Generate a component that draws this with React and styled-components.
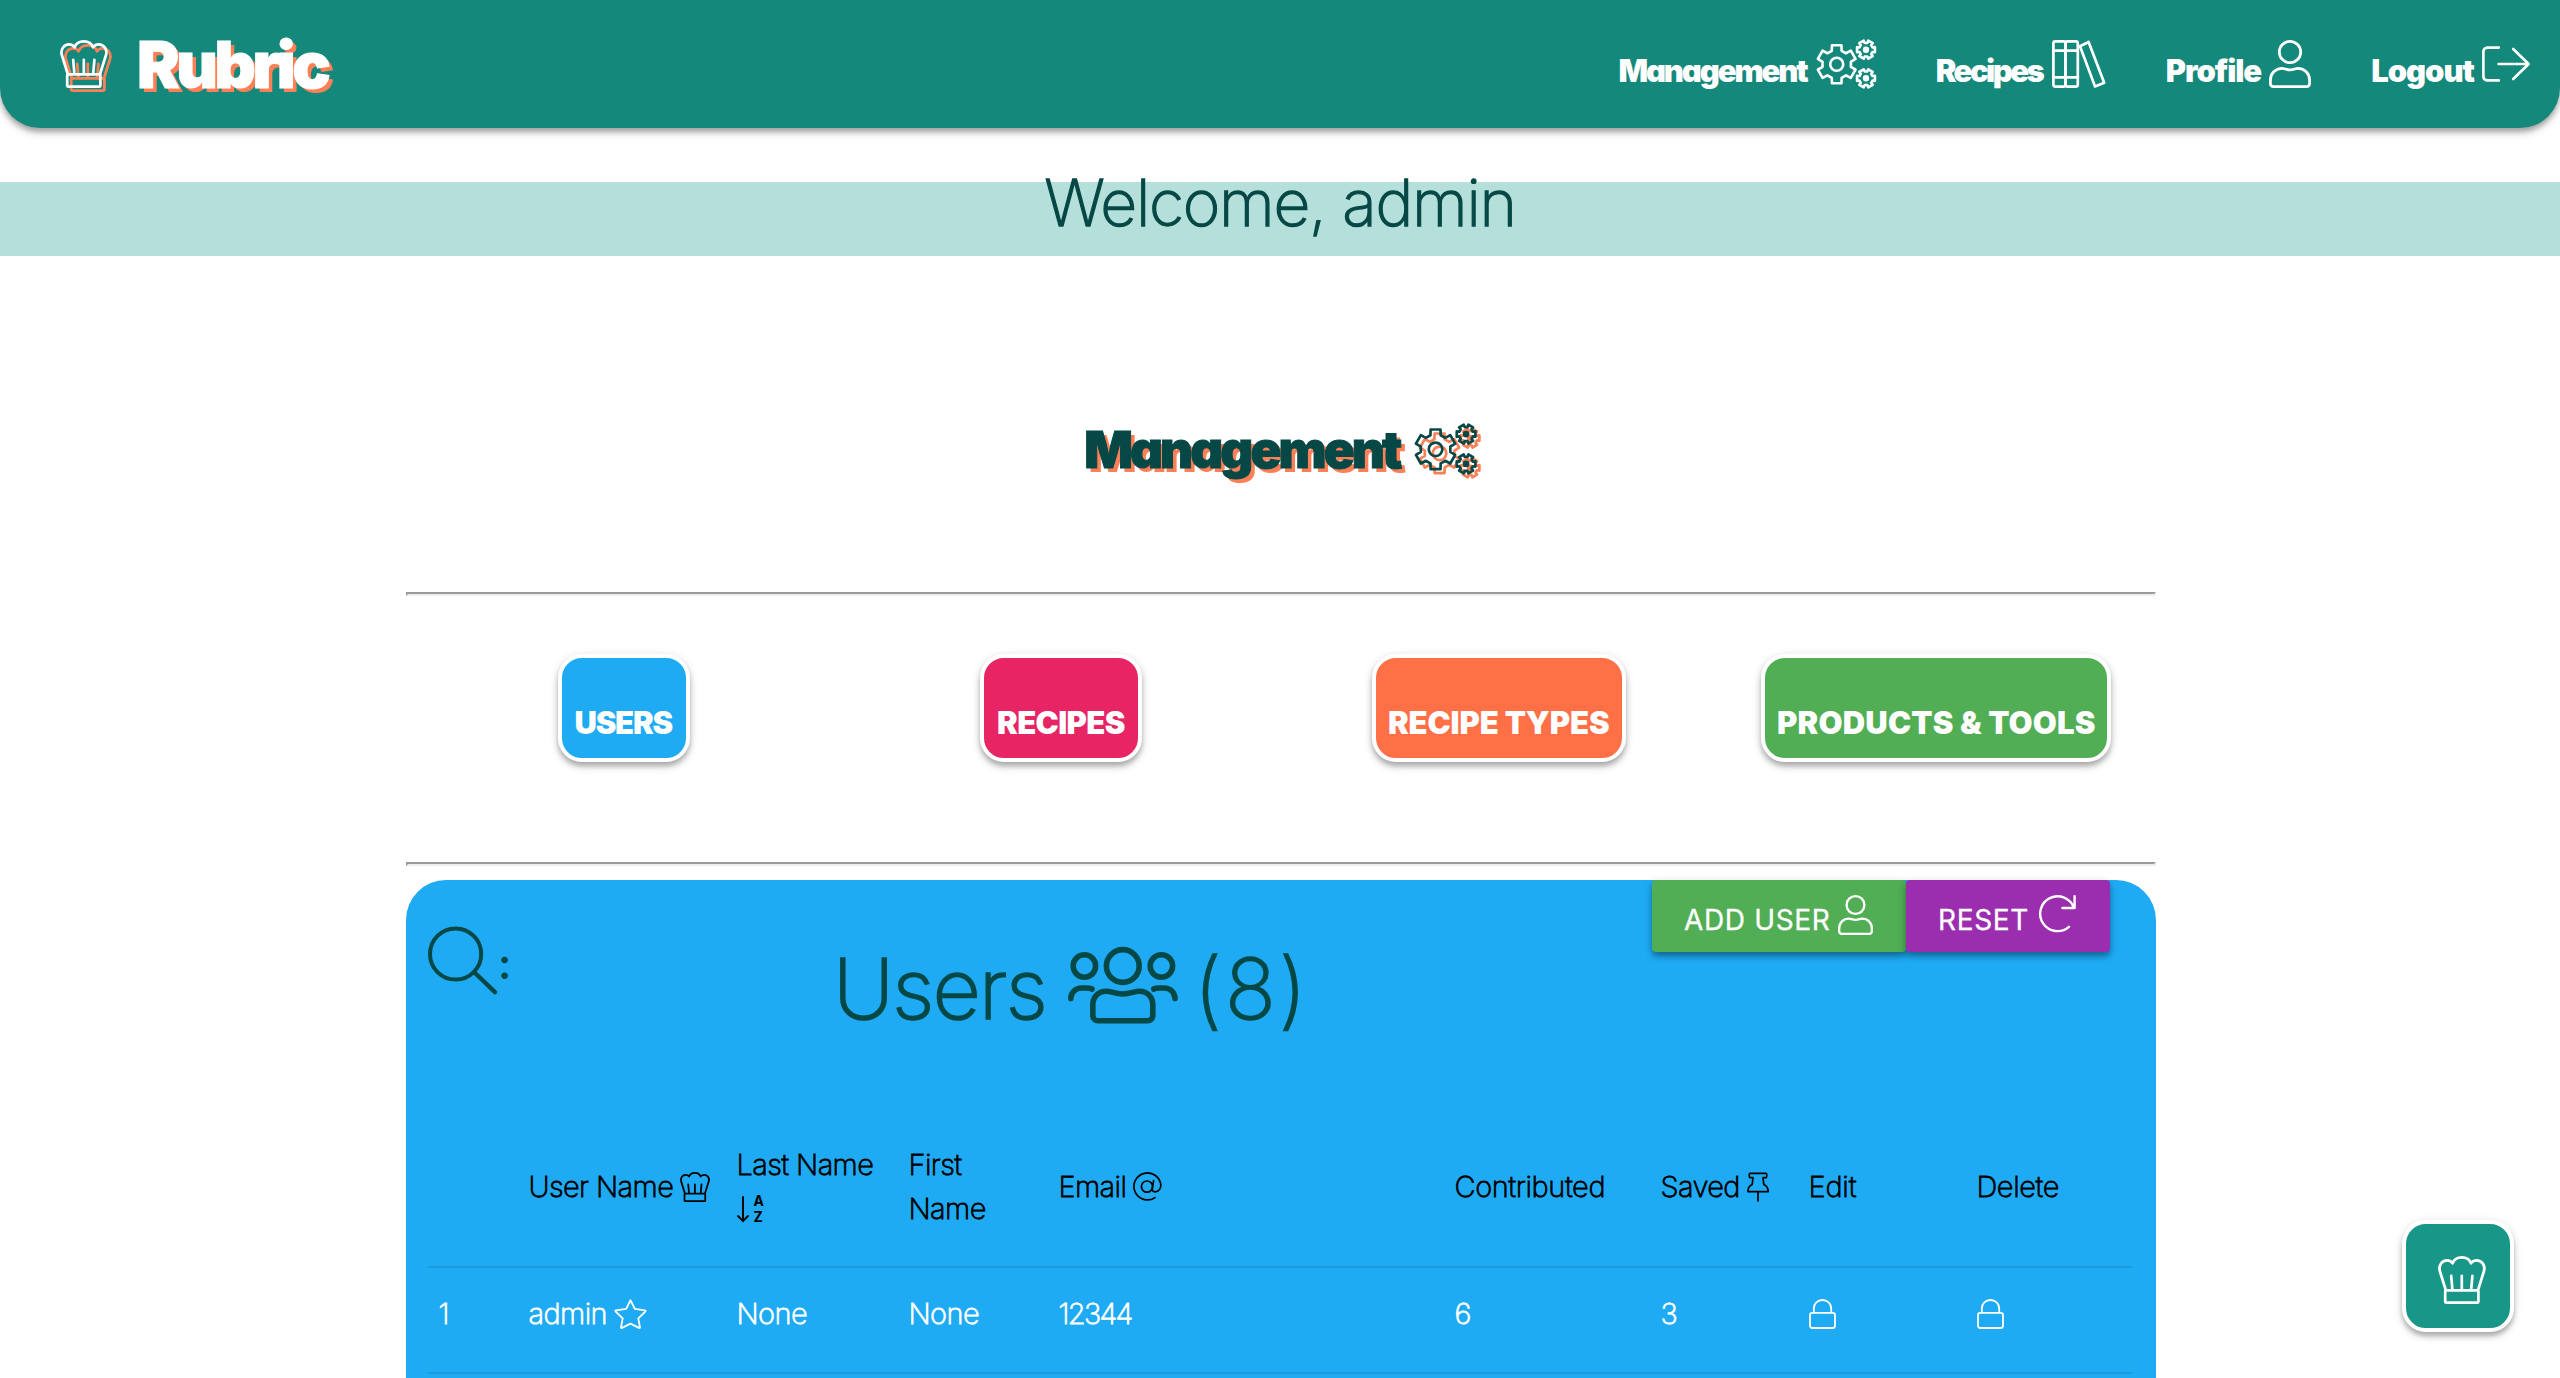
import React from "react";
import styled, { createGlobalStyle } from "styled-components";

const GlobalStyle = createGlobalStyle`
  * { box-sizing: border-box; }
  html, body { margin: 0; padding: 0; }
  body {
    height: 1378px;
    overflow: hidden;
    background: #fff;
    font-family: "Inter", "Liberation Sans", sans-serif;
  }
`;

const DARK = "#064846";
const CORAL = "#ff8057";

const Glyph = styled.svg`
  display: block;
  flex: none;
  overflow: visible;
  fill: none;
  stroke: currentColor;
  stroke-linecap: round;
  stroke-linejoin: round;
  filter: ${(p) => (p.$shadow ? `drop-shadow(${p.$shadow}px ${p.$shadow}px 0 ${CORAL})` : "none")};
`;

const Icon = ({ w, h, vw = w, vh = h, sw = 2.7, shadow, children }) => (
  <Glyph width={w} height={h} viewBox={`0 0 ${vw} ${vh}`} strokeWidth={sw} $shadow={shadow}>
    {children}
  </Glyph>
);

const ChefHat = ({ size = 48, sw, shadow }) => (
  <Icon w={size} h={size} vw={48} vh={48} sw={sw} shadow={shadow}>
    <path d="M7.6 33.5 L1.8 15 C0.2 9 4.3 4.4 8.9 4.4 C11 4.4 13.2 5.4 14.6 7.3 C16 3.4 19.6 1.4 23.8 1.4 S31.6 3.4 33 7.3 C34.4 5.4 36.6 4.4 38.8 4.4 C43.2 4.4 47.8 9 46 15 L40.2 33.5" />
    <rect x="7.2" y="34.4" width="33.2" height="12.2" rx="0.8" />
    <path d="M13.2 19.8 L14.4 33.5 M23.8 19.8 V33.5 M34.4 19.8 L33.2 33.5" />
  </Icon>
);

const gear = (cx, cy, inner, outer, start, top, base) => {
  const pts = [];
  for (let i = 0; i < 6; i += 1) {
    const mid = start + i * 60;
    [[-base, inner], [-top, outer], [top, outer], [base, inner]].forEach(([d, r]) => {
      const a = ((mid + d) * Math.PI) / 180;
      pts.push(`${(cx + r * Math.cos(a)).toFixed(2)} ${(cy + r * Math.sin(a)).toFixed(2)}`);
    });
  }
  return `M${pts.join("L")}Z`;
};

const Cogs = ({ w = 60, h = 48, shadow }) => (
  <Icon w={w} h={h} vw={60} vh={48} sw={2.6} shadow={shadow}>
    <path d={gear(20.7, 24.3, 14.4, 19.6, 30, 14, 20)} />
    <circle cx="20.7" cy="24.3" r="6.5" />
    <path d={gear(50, 9.7, 6.9, 9.3, 0, 16, 19)} />
    <circle cx="50" cy="9.7" r="1.9" fill="currentColor" />
    <path d={gear(50, 38.3, 6.9, 9.3, 0, 16, 19)} />
    <circle cx="50" cy="38.3" r="1.9" fill="currentColor" />
  </Icon>
);

const Books = () => (
  <Icon w={54} h={48} sw={2.7}>
    <rect x="1.4" y="1.4" width="12" height="45.2" rx="2" />
    <rect x="13.4" y="1.4" width="12.4" height="45.2" rx="2" />
    <path d="M1.4 10.6 H25.8 M1.4 37.4 H25.8" />
    <path d="M28 6.2 L36.6 2 L52.2 42.8 L43 46.4 Z" />
  </Icon>
);

const User = ({ w = 42, h = 48, sw = 2.8 }) => (
  <Icon w={w} h={h} vw={42} vh={48} sw={sw}>
    <circle cx="21" cy="12" r="10.7" />
    <path d="M13 28.3 C16 28.3 17 29.9 21 29.9 S26 28.3 29 28.3 C35.5 28.3 40.6 33.5 40.6 40 V43.5 A3 3 0 0 1 37.6 46.6 H4.4 A3 3 0 0 1 1.4 43.5 V40 C1.4 33.5 6.5 28.3 13 28.3Z" />
  </Icon>
);

const LogoutArrow = () => (
  <Icon w={48} h={36} sw={2.6}>
    <path d="M16.8 1.6 H5.4 A4 4 0 0 0 1.4 5.6 V30.4 A4 4 0 0 0 5.4 34.4 H16.8" />
    <path d="M16.6 18 H46.4 M31.2 3 L46.6 18 L31.2 33" />
  </Icon>
);

const Group = () => (
  <Icon w={110} h={77} sw={5.6}>
    <circle cx="54.8" cy="19" r="16.4" />
    <circle cx="16.4" cy="19" r="11.2" />
    <circle cx="93.4" cy="19" r="11.2" />
    <path d="M38 44.2 C44 44.2 46.5 47 54.8 47 S65.6 44.2 71.6 44.2 C79.4 44.2 84.8 50 84.8 58 V68.6 A5.2 5.2 0 0 1 79.6 73.8 H30 A5.2 5.2 0 0 1 24.8 68.6 V58 C24.8 50 30.2 44.2 38 44.2Z" />
    <path d="M2.8 51.4 C2.8 45.4 7.8 41 13.6 41 H18.6 C20.6 41 22.6 41.2 24 42 M107 51.4 C107 45.4 102 41 96.2 41 H91.2 C89.2 41 87.2 41.2 85.8 42" />
  </Icon>
);

const Magnifier = () => (
  <Icon w={70} h={69} sw={4}>
    <circle cx="27.6" cy="28" r="25.6" />
    <path d="M47 47 L67 66.2" strokeWidth="4.4" />
  </Icon>
);

const Refresh = () => (
  <Icon w={38} h={38} sw={2.4}>
    <path d="M36 13 A17.4 17.4 0 1 0 31 31.8 M36.6 1.2 V13 H24.4" />
  </Icon>
);

const SortAZ = () => (
  <Icon w={27} h={26} sw={1.9}>
    <path d="M6 1 V25 M1 20 L6 25.2 L11 20" />
    <Letter x="16.4" y="10.4">A</Letter>
    <Letter x="16.6" y="26">Z</Letter>
  </Icon>
);

const Letter = styled.text`
  font: 700 14px "Inter", sans-serif;
  letter-spacing: 0;
  -webkit-text-stroke: 0;
  fill: currentColor;
  stroke: none;
`;

const AtSign = () => (
  <Icon w={29} h={29} sw={1.7}>
    <circle cx="14" cy="14.6" r="5.6" />
    <path d="M20.6 8.6 L19.2 17 C18.8 21 26.8 21.4 27.9 13.6 A13.5 13.5 0 1 0 22 25.6" />
  </Icon>
);

const Star = () => (
  <Icon w={33} h={30} sw={1.8}>
    <path d="M16.5 1.2 L20.8 9.9 L31 11.3 C31.8 11.5 31.8 12.1 31.3 12.6 L24.3 19.3 L26 28.4 C26 29 25.6 29.2 25 28.9 L16.5 24.6 L8 28.9 C7.4 29.2 7 29 7 28.4 L8.7 19.3 L1.7 12.6 C1.2 12.1 1.2 11.5 2 11.3 L12.2 9.9 Z" />
  </Icon>
);

const Pin = () => (
  <Icon w={22} h={30} sw={1.7}>
    <path d="M3 1.4 H19 C20 1.4 20 5.6 19 5.6 H16 L16.8 12.4 C19.4 13.6 21.2 16 21.2 19.6 H0.9 C0.9 16 2.6 13.6 5.2 12.4 L6 5.6 H3 C2 5.6 2 1.4 3 1.4Z M11 19.6 V29" />
  </Icon>
);

const Lock = () => (
  <Icon w={27} h={30} sw={1.8}>
    <rect x="1" y="13.8" width="25" height="15.2" rx="2.2" />
    <path d="M4.8 13.6 V9.4 A8.7 8.4 0 0 1 22.2 9.4 V13.6" />
  </Icon>
);

const Header = styled.header`
  height: 128px;
  padding: 0 30px 0 60px;
  display: flex;
  align-items: center;
  justify-content: space-between;
  background: #14897b;
  color: #fff;
  border-radius: 0 0 40px 40px;
  box-shadow: 0 4px 4px 0 rgba(0, 0, 0, 0.16), 0 6px 10px -2px rgba(0, 0, 0, 0.18), 0 2px 10px 0 rgba(0, 0, 0, 0.14);
`;

const Chunky = styled.span`
  display: block;
  font-weight: 900;
  font-size: ${(p) => p.$size}px;
  line-height: 1;
  letter-spacing: ${(p) => p.$track || 0}px;
  margin-right: ${(p) => -(p.$track || 0)}px;
  font-feature-settings: "cv11";
  -webkit-text-stroke: ${(p) => p.$stroke || 0}px currentColor;
  white-space: nowrap;
  text-shadow: ${(p) => (p.$shadow ? `${p.$shadow}px ${p.$shadow}px 0 ${CORAL}` : "none")};
`;

const Thin = styled.span`
  display: block;
  margin: 0;
  font-weight: 200;
  font-size: ${(p) => p.$size}px;
  line-height: ${(p) => p.$line || 1};
  letter-spacing: ${(p) => p.$track || 0}px;
  -webkit-text-stroke: ${(p) => p.$stroke || 0.5}px currentColor;
  white-space: nowrap;
`;

const Brand = styled.a`
  display: flex;
  align-items: center;
  gap: 29px;

  ${Chunky} {
    padding-top: 2px;
  }
`;

const Nav = styled.nav`
  display: flex;
  gap: 60px;
`;

const NavLink = styled.a`
  height: 48px;
  display: flex;
  align-items: center;
  gap: 7px;

  ${Chunky} {
    padding-top: 13px;
  }
`;

const Band = styled.section`
  margin-top: 54px;
  height: 74px;
  background: #b5dfdb;
  color: ${DARK};
  display: flex;
  justify-content: center;
`;

const Heading = styled.h2`
  margin: 0;
  height: 336px;
  padding: 168px 0 0 1px;
  color: ${DARK};
  display: flex;
  justify-content: center;
  align-items: flex-start;
  gap: 12px;

  ${Chunky} {
    line-height: 51px;
  }
`;

const Main = styled.main`
  width: 1750px;
  margin-left: 406px;
`;

const Rule = styled.hr`
  margin: 0;
  height: 4px;
  border: 2px solid;
  border-color: #9a9a9a #eee #eee #9a9a9a;
`;

const Tabs = styled.div`
  margin: 0 1px 0 -1px;
  height: 266px;
  padding-top: 58px;
  display: grid;
  grid-template-columns: repeat(4, 1fr);
  justify-items: center;
  align-items: start;
`;

const Tab = styled.button`
  width: ${(p) => p.$width}px;
  height: 108px;
  padding: 28px 0 0;
  display: flex;
  align-items: center;
  justify-content: center;
  border: 4px solid #fff;
  border-radius: 24px;
  background: ${(p) => p.$color};
  color: #fff;
  font-family: inherit;
  box-shadow: 0 4px 4px 0 rgba(0, 0, 0, 0.15), 0 6px 10px -2px rgba(0, 0, 0, 0.16), 0 2px 10px 0 rgba(0, 0, 0, 0.14);
`;

const Panel = styled.section`
  margin-top: 14px;
  height: 560px;
  padding: 0 24px 0 22px;
  background: #1fabf3;
  border-radius: 40px 40px 0 0;
`;

const PanelTop = styled.div`
  height: 227px;
  display: flex;
  align-items: flex-start;
  color: ${DARK};
`;

const Search = styled.label`
  width: 405px;
  padding-top: 46px;
  display: flex;
`;

const Colon = styled.span`
  padding: 21px 0 0;
  font-size: 42px;
  line-height: 34px;
  font-weight: 600;
`;

const Title = styled.h3`
  margin: 0;
  flex: 1;
  padding-top: 67px;
  display: flex;
  color: ${DARK};
`;

const TitleText = styled(Thin)`
  line-height: 84px;
  width: ${(p) => p.$width}px;
  padding-left: ${(p) => p.$indent || 0}px;
`;

const Actions = styled.div`
  display: flex;
  margin-right: 22px;
`;

const Action = styled.button`
  width: ${(p) => p.$width}px;
  height: 72px;
  padding: 15px 0 0 32px;
  display: flex;
  align-items: flex-start;
  gap: ${(p) => p.$gap}px;
  border: 0;
  border-radius: 4px;
  background: ${(p) => p.$color};
  color: #fff;
  font-family: inherit;
  box-shadow: 0 4px 4px 0 rgba(0, 0, 0, 0.18), 0 6px 10px -2px rgba(0, 0, 0, 0.18), 0 2px 10px 0 rgba(0, 0, 0, 0.14);
`;

const ActionText = styled.span`
  font-size: 28px;
  line-height: 50px;
  letter-spacing: 0.65px;
  -webkit-text-stroke: 0.3px currentColor;
  white-space: nowrap;
`;

const Row = styled.div`
  height: ${(p) => (p.$head ? 161 : 106)}px;
  padding-bottom: ${(p) => (p.$head ? 0 : 12)}px;
  display: grid;
  grid-template-columns: 90px 208px 172px 150px 396px 206px 148px 168px 1fr;
  align-items: center;
  border-bottom: 2px solid #1c9ad9;
  color: ${(p) => (p.$head ? "#000" : "#fff")};
`;

const Cell = styled.div`
  padding-left: 10.5px;
  display: flex;
  flex-wrap: wrap;
  align-items: center;
  column-gap: 7px;
  min-height: 44px;
  font-size: 29px;
  font-weight: 200;
  line-height: 44px;
  letter-spacing: ${(p) => p.$track ?? -0.6}px;
  -webkit-text-stroke: 0.8px currentColor;
`;

const IconLine = styled.span`
  width: 100%;
  height: 44px;
  display: flex;
  align-items: center;
`;

const Fab = styled.button`
  position: fixed;
  right: 46px;
  bottom: 46px;
  width: 112px;
  height: 112px;
  padding: 8px 0 0 8px;
  display: flex;
  align-items: center;
  justify-content: center;
  border: 4px solid #fff;
  border-radius: 24px;
  background: #189688;
  color: #fff;
  box-shadow: 0 4px 4px 0 rgba(0, 0, 0, 0.15), 0 6px 10px -2px rgba(0, 0, 0, 0.16), 0 2px 10px 0 rgba(0, 0, 0, 0.14);
`;

const links = [
  { label: "Management", track: -2.1, icon: <Cogs /> },
  { label: "Recipes", track: -2.5, icon: <Books /> },
  { label: "Profile", track: -1.1, icon: <User /> },
  { label: "Logout", track: -1, icon: <LogoutArrow /> },
];

const tabs = [
  { label: "USERS", width: 132, color: "#1fabf3", track: -1.2 },
  { label: "RECIPES", width: 162, color: "#e72565", track: -0.6 },
  { label: "RECIPE TYPES", width: 254, color: "#ff7047", track: -0.1 },
  { label: "PRODUCTS & TOOLS", width: 350, color: "#51ae55", track: 0.2 },
];

export default function App() {
  return (
    <>
      <GlobalStyle />
      <Header>
        <Brand>
          <ChefHat shadow={4} />
          <Chunky $size={64} $track={-3.4} $stroke={1} $shadow={4}>Rubric</Chunky>
        </Brand>
        <Nav>
          {links.map((l) => (
            <NavLink key={l.label}>
              <Chunky $size={31} $track={l.track}>{l.label}</Chunky>
              {l.icon}
            </NavLink>
          ))}
        </Nav>
      </Header>
      <Band>
        <Thin as="h1" $size={64} $line="42px" $track={-1.25} $stroke={1.3}>Welcome, admin</Thin>
      </Band>
      <Heading>
        <Chunky $size={51} $track={-2.9} $stroke={1} $shadow={4}>Management</Chunky>
        <Cogs w={62.5} h={50} shadow={4} />
      </Heading>
      <Main>
        <Rule />
        <Tabs>
          {tabs.map((t) => (
            <Tab key={t.label} $width={t.width} $color={t.color}>
              <Chunky $size={31} $track={t.track}>{t.label}</Chunky>
            </Tab>
          ))}
        </Tabs>
        <Rule />
        <Panel>
          <PanelTop>
            <Search>
              <Magnifier />
              <Colon>:</Colon>
            </Search>
            <Title>
              <TitleText $size={84} $track={-2} $stroke={1.6} $width={235}>Users</TitleText>
              <Group />
              <TitleText $size={84} $track={3} $stroke={1.6} $width={140} $indent={16}>(8)</TitleText>
            </Title>
            <Actions>
              <Action $width={254} $color="#51ae55" $gap={8}>
                <ActionText>ADD USER</ActionText>
                <User w={35} h={40} sw={2.8} />
              </Action>
              <Action $width={204} $color="#9a2eae" $gap={9}>
                <ActionText>RESET</ActionText>
                <Refresh />
              </Action>
            </Actions>
          </PanelTop>
          <Row $head>
            <Cell />
            <Cell>User Name <ChefHat size={30} sw={2.8} /></Cell>
            <Cell>Last Name <IconLine><SortAZ /></IconLine></Cell>
            <Cell>First<br />Name</Cell>
            <Cell>Email <AtSign /></Cell>
            <Cell $track={-0.4}>Contributed</Cell>
            <Cell>Saved <Pin /></Cell>
            <Cell $track={-0.2}>Edit</Cell>
            <Cell $track={-0.4}>Delete</Cell>
          </Row>
          <Row>
            <Cell>1</Cell>
            <Cell>admin <Star /></Cell>
            <Cell>None</Cell>
            <Cell>None</Cell>
            <Cell $track={-1.7}>12344</Cell>
            <Cell>6</Cell>
            <Cell>3</Cell>
            <Cell><Lock /></Cell>
            <Cell><Lock /></Cell>
          </Row>
        </Panel>
      </Main>
      <Fab aria-label="Kitchen menu">
        <ChefHat />
      </Fab>
    </>
  );
}
